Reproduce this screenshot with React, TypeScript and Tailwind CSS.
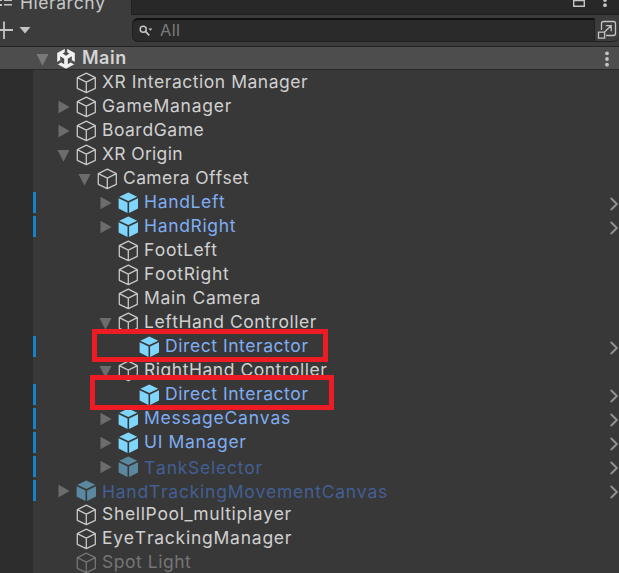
import React from "react";

type Kind = "object" | "prefab" | "prefabOff" | "objectOff";
type Arrow = "open" | "closed" | "none";
type Spacing = "tight" | "snug" | "normal" | "wide";

interface Node {
  name: string;
  depth: 0 | 1 | 2 | 3;
  kind: Kind;
  arrow: Arrow;
  spacing: Spacing;
  linked?: boolean;
}

const nodes: Node[] = [
  { name: "XR Interaction Manager", depth: 0, kind: "object", arrow: "none", spacing: "snug" },
  { name: "GameManager", depth: 0, kind: "object", arrow: "closed", spacing: "wide" },
  { name: "BoardGame", depth: 0, kind: "object", arrow: "closed", spacing: "snug" },
  { name: "XR Origin", depth: 0, kind: "object", arrow: "open", spacing: "tight" },
  { name: "Camera Offset", depth: 1, kind: "object", arrow: "open", spacing: "tight" },
  { name: "HandLeft", depth: 2, kind: "prefab", arrow: "closed", spacing: "normal", linked: true },
  { name: "HandRight", depth: 2, kind: "prefab", arrow: "closed", spacing: "normal", linked: true },
  { name: "FootLeft", depth: 2, kind: "object", arrow: "none", spacing: "snug" },
  { name: "FootRight", depth: 2, kind: "object", arrow: "none", spacing: "normal" },
  { name: "Main Camera", depth: 2, kind: "object", arrow: "none", spacing: "normal" },
  { name: "LeftHand Controller", depth: 2, kind: "object", arrow: "open", spacing: "snug" },
  { name: "Direct Interactor", depth: 3, kind: "prefab", arrow: "none", spacing: "snug", linked: true },
  { name: "RightHand Controller", depth: 2, kind: "object", arrow: "open", spacing: "snug" },
  { name: "Direct Interactor", depth: 3, kind: "prefab", arrow: "none", spacing: "snug", linked: true },
  { name: "MessageCanvas", depth: 2, kind: "prefab", arrow: "closed", spacing: "wide", linked: true },
  { name: "UI Manager", depth: 2, kind: "prefab", arrow: "closed", spacing: "normal", linked: true },
  { name: "TankSelector", depth: 2, kind: "prefabOff", arrow: "closed", spacing: "wide", linked: true },
  { name: "HandTrackingMovementCanvas", depth: 0, kind: "prefabOff", arrow: "closed", spacing: "wide", linked: true },
  { name: "ShellPool_multiplayer", depth: 0, kind: "object", arrow: "none", spacing: "normal" },
  { name: "EyeTrackingManager", depth: 0, kind: "object", arrow: "none", spacing: "wide" },
  { name: "Spot Light", depth: 0, kind: "objectOff", arrow: "none", spacing: "snug" },
];

const indent = ["pl-[21px]", "pl-[42px]", "pl-[63px]", "pl-[84px]"];

const tracking: Record<Spacing, string> = {
  tight: "tracking-[0.38px]",
  snug: "tracking-[0.53px]",
  normal: "tracking-[0.66px]",
  wide: "tracking-[0.76px]",
};

const textStyle: Record<Kind, string> = {
  object: "text-[#d0d0d0]",
  prefab: "text-[#7fadf3]",
  prefabOff: "text-[#435f93] pt-[2px]",
  objectOff: "text-[#757575]",
};

function Cube({ kind }: { kind: Kind }) {
  if (kind === "prefab" || kind === "prefabOff") {
    return (
      <svg className={`mt-[2px] h-[22px] w-5 shrink-0 ${kind === "prefab" ? "text-[#7fd6fd]" : "text-[#5a889e]"}`} viewBox="0 0 20 22" fill="currentColor">
        <path d="M10.3 .5 19.2 4.7 10.3 8.9 1.4 4.7Z" />
        <path d="M.6 6.3 9.5 10.4V21L.6 16.6Z" />
        <path d="M20 6.3 11.1 10.4V21L20 16.6Z" />
      </svg>
    );
  }
  return (
    <svg className={`mt-[2px] h-[22px] w-5 shrink-0 ${kind === "object" ? "text-[#c8c8c8]" : "text-[#757575]"}`} viewBox="0 0 20 22" fill="none" stroke="currentColor" strokeWidth="1.3" strokeLinejoin="round">
      <path d="M10.3 1.2 19.3 5.7V16.3L10.3 20.7 1.3 16.3V5.7ZM1.3 5.7 10.3 10.1 19.3 5.7M10.3 10.1V20.7" />
    </svg>
  );
}

function Triangle({ arrow }: { arrow: Arrow }) {
  return (
    <svg className="mt-[7px] mr-1.5 h-[13px] w-[13px] shrink-0 text-[#6c6c6c]" viewBox="0 0 13 13" fill="currentColor">
      {arrow === "open" && <path d="M.5 1h12L6.5 12.7Z" />}
      {arrow === "closed" && <path d="M1.5 -.2 12.7 5.9 1.5 12.2Z" />}
    </svg>
  );
}

function UnityLogo() {
  return (
    <svg className="mt-px ml-[7px] h-[21px] w-5 shrink-0" viewBox="0 0 20 21">
      <path d="M10 .3 18.8 5V16L10 20.8 1.2 16V5Z" fill="#f2f2f2" />
      <path d="M10 0V4.6M.8 15.6 4.6 13.4M19.2 15.6 15.4 13.4" stroke="#4d4d4d" strokeWidth="2.4" />
      <path d="M10 3.6 13.4 5.6 10 7.8 6.6 5.6Z" fill="#4d4d4d" />
      <path d="M4.2 8.2 8.2 10.8V16.2L4.2 13.8Z" fill="#4d4d4d" />
      <path d="M15.8 8.2 11.8 10.8V16.2L15.8 13.8Z" fill="#4d4d4d" />
    </svg>
  );
}

function Dots({ className }: { className: string }) {
  return (
    <svg className={className} viewBox="0 0 4 16" fill="#c4c4c4">
      <circle cx="2" cy="2.3" r="1.9" />
      <circle cx="2" cy="8" r="1.9" />
      <circle cx="2" cy="13.7" r="1.9" />
    </svg>
  );
}

function Row({ node }: { node: Node }) {
  return (
    <div className="flex h-6 shrink-0 items-start">
      <div className={`mt-[2px] h-[21px] w-[3px] shrink-0 ${node.linked ? "bg-[#1583c5]" : ""}`} />
      <div className={`flex h-6 flex-1 items-start ${indent[node.depth]}`}>
        <Triangle arrow={node.arrow} />
        <Cube kind={node.kind} />
        <span className={`ml-[6px] h-6 text-[17.5px] leading-[24px] whitespace-nowrap [font-kerning:none] ${tracking[node.spacing]} ${textStyle[node.kind]}`}>
          {node.name}
        </span>
      </div>
      {node.linked && (
        <svg className="mt-[7px] h-[14px] w-[10px] shrink-0" viewBox="0 0 10 14" fill="none" stroke="#929292" strokeWidth="2">
          <path d="M1.8 1 7.8 7 1.8 13" />
        </svg>
      )}
    </div>
  );
}

export default function App() {
  return (
    <div className="relative flex h-[573px] w-[619px] flex-col overflow-hidden bg-[#383838] font-['Inter',sans-serif]">
      <div className="flex h-[15px] shrink-0 bg-[#3c3c3c]">
        <div className="flex h-[15px] w-[131px] shrink-0">
          <svg className="h-3 w-[13px] shrink-0" viewBox="0 0 13 12" fill="#c4c4c4">
            <path d="M0 0h2v1H0zM4 0h8v1H4zM0 4h2v2H0zM4 4h8v1.6H4z" />
          </svg>
          <span className="-mt-[9px] ml-[7px] text-[17.5px] leading-[24px] tracking-[0.55px] text-[#c8c8c8] [font-kerning:none]">Hierarchy</span>
        </div>
        <div className="flex flex-1 items-start border-b border-l border-[#202020] bg-[#282828]">
          <svg className="ml-auto h-2 w-3 shrink-0" viewBox="0 0 12 8" fill="none" stroke="#c4c4c4" strokeWidth="1.4">
            <path d="M.7 0V6.3H11.3V0M0 .6h12" />
          </svg>
          <svg className="mr-3 ml-[18px] h-2 w-1 shrink-0" viewBox="0 0 4 8" fill="#c4c4c4">
            <circle cx="2" cy="0" r="1.9" />
            <circle cx="2" cy="5.2" r="1.9" />
          </svg>
        </div>
      </div>

      <div className="flex h-8 shrink-0 items-start border-b border-[#242424] bg-[#3c3c3c] pt-[3px]">
        <svg className="h-6 w-[132px] shrink-0" viewBox="0 0 132 24">
          <path d="M0 12H13M4 3.5V21" stroke="#c4c4c4" strokeWidth="1.8" />
          <path d="M19.5 9h11L25 15.5Z" fill="#c4c4c4" />
        </svg>
        <div className="flex h-6 w-[463px] shrink-0 items-start rounded-l-md border border-t-2 border-[#202020] border-t-[#101010] bg-[#2a2a2a]">
          <svg className="mt-[5px] ml-[6px] h-[12px] w-[14px] shrink-0" viewBox="0 0 14 12">
            <circle cx="4.2" cy="4.2" r="3" fill="none" stroke="#c4c4c4" strokeWidth="1.5" />
            <path d="m6.4 6.4 3.8 4" stroke="#c4c4c4" strokeWidth="1.7" />
            <path d="M9.4 3.5h4L11.4 5.8Z" fill="#c4c4c4" />
          </svg>
          <span className="ml-[7px] text-[16.5px] leading-[21px] tracking-[0.3px] text-[#7a7a7a]">All</span>
        </div>
        <div className="flex h-6 flex-1 items-start rounded-br-md border-b border-[#202020]">
          <svg className="ml-[2px] h-[22px] w-[21px]" viewBox="0 0 21 22" fill="none" stroke="#c4c4c4" strokeWidth="1.3">
            <path d="M4.5 12V5.5Q4.5 3.5 6.5 3.5H16.5Q18.5 3.5 18.5 5.5V15.5Q18.5 17.5 16.5 17.5H9M1.5 14.2H7.6V20.2H1.5ZM7.5 14 14 7.8M8.8 7.7H14.2V13.2" />
          </svg>
        </div>
      </div>

      <div className="flex h-[22px] shrink-0 items-start bg-[#4d4d4d]">
        <svg className="mt-[6px] ml-9 h-[13px] w-[13px] shrink-0" viewBox="0 0 13 13" fill="#797979">
          <path d="M.5 1h12L6.5 12.7Z" />
        </svg>
        <UnityLogo />
        <span className="ml-[6px] text-[18px] leading-[21px] font-semibold tracking-[0.5px] text-[#d4d4d4]">Main</span>
        <Dots className="mt-1 mr-[10px] ml-auto h-4 w-1" />
      </div>

      <div className="flex h-[504px] shrink-0 border-t border-[#282828]">
        <div className="w-[33px] shrink-0 bg-[#2d2d2d]" />
        <div className="flex flex-1 flex-col">
          {nodes.map((node, i) => (
            <Row key={i} node={node} />
          ))}
        </div>
      </div>

      <div className="absolute top-[329px] left-[92px] h-[33px] w-[236px] border-[5px] border-[#ed1c24]" />
      <div className="absolute top-[375px] left-[90px] h-[35px] w-[244px] border-[5px] border-[#ed1c24]" />
    </div>
  );
}
